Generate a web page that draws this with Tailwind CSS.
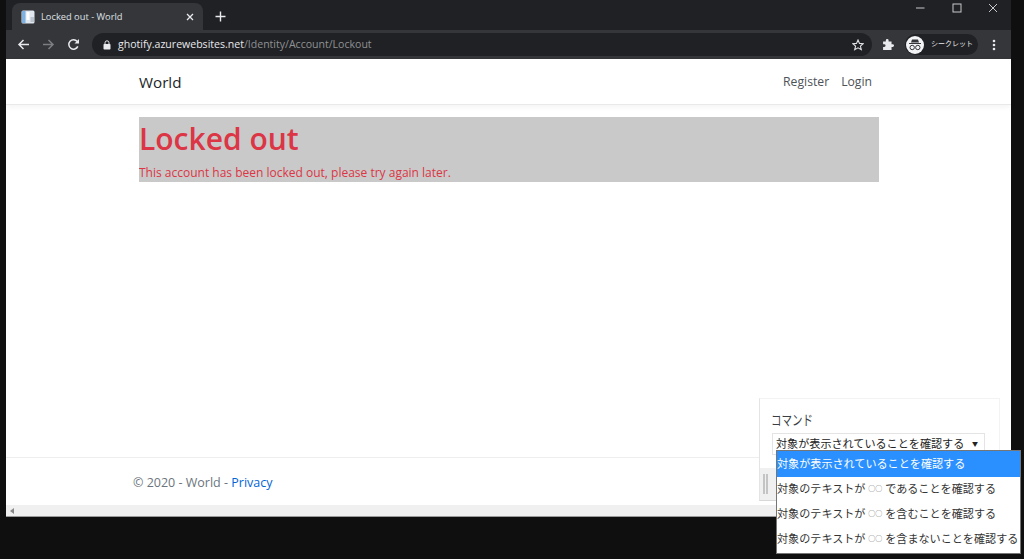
<!DOCTYPE html>
<html lang="ja">
<head>
    <meta charset="UTF-8">
    <title>Locked out - World</title>
    <script src="https://cdn.jsdelivr.net/npm/@tailwindcss/browser@4"></script>
</head>
<body class="relative w-[1024px] h-[559px] overflow-hidden bg-[#0f0f0f] font-['Open_Sans','Noto_Sans_CJK_JP',sans-serif]">
    <div class="relative ml-[6px] w-[1005px] h-[517px] flex flex-col">
        <!-- Tab strip -->
        <div class="h-[30px] bg-[#202124] flex items-end pl-[6px] shrink-0">
            <div class="w-[191px] h-[27px] bg-[#35363a] rounded-t-lg flex items-center pl-[9px] pr-[7px]">
                <svg width="14" height="14" viewBox="0 0 14 14" class="shrink-0">
                    <rect x="0.5" y="0.5" width="13" height="13" rx="1.5" fill="#dfe6ee"/>
                    <rect x="1" y="1" width="3.5" height="12" fill="#7fb2e0"/>
                    <rect x="5.5" y="2" width="3" height="8" fill="#fff"/>
                    <rect x="9.5" y="7" width="3.5" height="5" fill="#b9c4cf"/>
                </svg>
                <span class="ml-[6px] text-[9.3px] text-[#dee1e6] whitespace-nowrap">Locked out - World</span>
                <svg width="8" height="8" viewBox="0 0 8 8" class="ml-auto mr-[2px]"><path d="M1 1l6 6M7 1l-6 6" stroke="#e8eaed" stroke-width="1.3"/></svg>
            </div>
            <svg width="11" height="11" viewBox="0 0 11 11" class="ml-[12px] mb-[8px]"><path d="M5.5 0.5v10M0.5 5.5h10" stroke="#e8eaed" stroke-width="1.4"/></svg>
            <div class="ml-auto self-start flex items-center h-[16px] mr-[13px]">
                <svg width="10" height="10" viewBox="0 0 10 10"><path d="M1 5h8.5" stroke="#c8c9cb" stroke-width="1"/></svg>
                <svg width="10" height="10" viewBox="0 0 10 10" class="ml-[27px]"><rect x="1" y="1" width="8" height="8" fill="none" stroke="#c8c9cb"/></svg>
                <svg width="10" height="10" viewBox="0 0 10 10" class="ml-[26px]"><path d="M1 1l8 8M9 1l-8 8" stroke="#c8c9cb"/></svg>
            </div>
        </div>
        <!-- Toolbar -->
        <div class="h-[29px] bg-[#35363a] flex items-center shrink-0 pl-[11px]">
            <svg width="13" height="13" viewBox="0 0 13 13" class="shrink-0"><path d="M12 6.5H2M6.5 2L2 6.5 6.5 11" fill="none" stroke="#e8eaed" stroke-width="1.5"/></svg>
            <svg width="13" height="13" viewBox="0 0 13 13" class="ml-[12px] shrink-0"><path d="M1 6.5h10M6.5 2L11 6.5 6.5 11" fill="none" stroke="#7c7e81" stroke-width="1.5"/></svg>
            <svg width="13" height="13" viewBox="0 0 13 13" class="ml-[12px] shrink-0"><path d="M10.8 8.4A4.7 4.7 0 1 1 10.2 3.5" fill="none" stroke="#e8eaed" stroke-width="1.5"/><path d="M12 1v4.5H7.5z" fill="#e8eaed"/></svg>
            <div class="ml-[12px] w-[780px] h-[23px] bg-[#202124] rounded-full flex items-center pl-[11px] pr-[8px] shrink-0">
                <svg width="8" height="10" viewBox="0 0 8 10" class="shrink-0"><rect x="0.5" y="4" width="7" height="5.5" rx="0.8" fill="#e8eaed"/><path d="M2 4.500V2.800a2 2 0 0 1 4 0V4.500" fill="none" stroke="#e8eaed"/></svg>
                <span class="ml-[7px] pt-[1px] text-[10.55px] text-[#e8eaed] whitespace-nowrap">ghotify.azurewebsites.net<span class="text-[#8f9194]">/Identity/Account/Lockout</span></span>
                <svg width="12" height="12" viewBox="0 0 12 12" class="ml-auto"><path d="M6 1l1.5 3.400 3.700.3-2.800 2.400.9 3.600L6 8.800l-3.300 1.900.9-3.600L.8 4.700l3.700-.3z" fill="none" stroke="#dfe1e5" stroke-width="1.1"/></svg>
            </div>
            <svg width="13" height="13" viewBox="0 0 12 12" class="ml-[10px] shrink-0"><path d="M1 3.200h2.500V2.200a1.300 1.300 0 0 1 2.600 0v1H8.800v2.500h1a1.300 1.300 0 0 1 0 2.600h-1V11H1V8.300h1a1.300 1.300 0 0 0 0-2.600H1z" fill="#e8eaed"/></svg>
            <div class="ml-[10px] w-[73px] h-[21px] bg-[#202124] rounded-full flex items-center pl-[1px] shrink-0">
                <div class="w-[18px] h-[18px] rounded-full bg-[#f1f3f4] flex items-center justify-center shrink-0">
                    <svg width="14" height="12" viewBox="0 0 14 12"><path d="M4 0.500h6l1 3H3zM1 4h12v1H1z" fill="#35363a"/><circle cx="4.200" cy="8.500" r="2.200" fill="none" stroke="#35363a"/><circle cx="9.800" cy="8.500" r="2.200" fill="none" stroke="#35363a"/></svg>
                </div>
                <span class="ml-[7px] text-[7px] text-[#e8eaed] whitespace-nowrap">シークレット</span>
            </div>
            <svg width="4" height="12" viewBox="0 0 4 12" class="ml-[14px] shrink-0"><circle cx="2" cy="2" r="1.300" fill="#e8eaed"/><circle cx="2" cy="6" r="1.300" fill="#e8eaed"/><circle cx="2" cy="10" r="1.300" fill="#e8eaed"/></svg>
        </div>
        <!-- Page -->
        <div class="flex-1 bg-white flex flex-col min-h-0">
            <nav class="h-[46px] pt-[2px] border-b border-[#e9e9e9] shadow-[0_2px_6px_rgba(0,0,0,0.05)] flex items-center pl-[133px] pr-[139px] shrink-0 text-[#212529]">
                <span class="text-[15.2px]">World</span>
                <span class="ml-auto text-[12.2px] text-[#4d5256]">Register</span>
                <span class="ml-[12px] text-[12.2px] text-[#4d5256]">Login</span>
            </nav>
            <main class="flex-1 pt-[12px] pl-[133px]">
                <div class="w-[740px] h-[65px] bg-[#c9c9c9] text-[#dc3545] overflow-hidden">
                    <h1 class="text-[30px] leading-[44px] font-semibold">Locked out</h1>
                    <p class="text-[12px] leading-[18px] mt-[3px]">This account has been locked out, please try again later.</p>
                </div>
            </main>
            <footer class="h-[48px] pt-[3px] border-t border-[#eeeeee] flex items-center pl-[127px] text-[12.5px] text-[#6c757d] shrink-0">
                <span>© 2020 - World - <span class="text-[#0366d6]">Privacy</span></span>
            </footer>
            <!-- Horizontal scrollbar -->
            <div class="h-[12px] bg-[#f0f0f0] border-b border-[#9a9a9a] flex items-center pl-[4px] shrink-0">
                <div class="w-0 h-0 border-y-[3px] border-y-transparent border-r-[4px] border-r-[#888]"></div>
            </div>
        </div>
    </div>

    <!-- Floating command panel -->
    <div class="absolute left-[759px] top-[398px] w-[241px] h-[103px] bg-white border border-[#f3f3f3] border-l-[#e4e4e4] border-b-[#d8d8d8]">
        <div class="pl-[11px] pt-[11px] text-[14px] leading-[20px] text-[#3a3f45]"><span class="inline-block origin-left scale-x-75">コマンド</span></div>
        <div class="ml-[12px] mt-[3px] w-[213px] h-[22px] border border-[#e4e4e4] flex items-center pl-[3px] text-[11.1px] text-[#222]">
            対象が表示されていることを確認する
            <span class="ml-auto mr-[6px] text-[6px]">▼</span>
        </div>
        <div class="absolute left-0 right-0 bottom-0 h-[32px] bg-[#f0f0f0] flex items-center pl-[3px] gap-[1px]">
            <div class="w-[2px] h-[20px] bg-[#c4c4c4]"></div>
            <div class="w-[2px] h-[20px] bg-[#c4c4c4]"></div>
        </div>
    </div>

    <!-- Open select menu -->
    <div class="absolute left-[776px] top-[450px] w-[245px] h-[104px] bg-white border border-[#767676] text-[11.1px] text-[#333]">
        <div class="h-[26px] bg-[#2a90ff] text-white flex items-center whitespace-nowrap">対象が表示されていることを確認する</div>
        <div class="h-[25px] flex items-center whitespace-nowrap">対象のテキストが&nbsp;<span class="text-[7px] text-[#666]">○○</span>&nbsp;であることを確認する</div>
        <div class="h-[25px] flex items-center whitespace-nowrap">対象のテキストが&nbsp;<span class="text-[7px] text-[#666]">○○</span>&nbsp;を含むことを確認する</div>
        <div class="h-[25px] flex items-center whitespace-nowrap">対象のテキストが&nbsp;<span class="text-[7px] text-[#666]">○○</span>&nbsp;を含まないことを確認する</div>
    </div>
</body>
</html>
